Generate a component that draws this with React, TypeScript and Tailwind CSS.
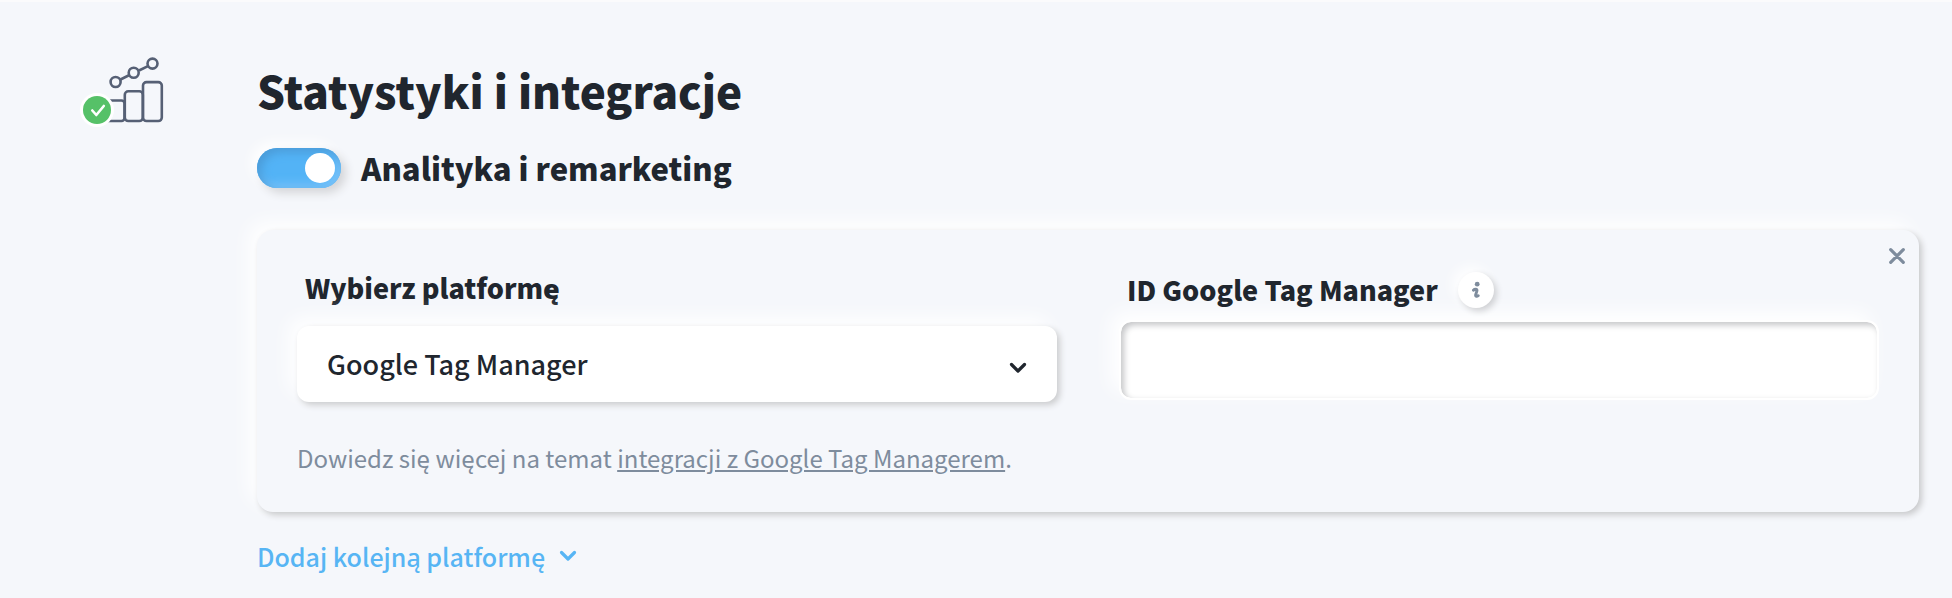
import { ReactNode } from "react";

type FieldLabelProps = {
  htmlFor: string;
  children: ReactNode;
};

function FieldLabel({ htmlFor, children }: FieldLabelProps) {
  return (
    <label htmlFor={htmlFor} className="text-[27px] leading-9 font-black">
      {children}
    </label>
  );
}

function ChevronDown({ className }: { className: string }) {
  return (
    <svg viewBox="0 0 18 12" className={className} fill="none" aria-hidden="true">
      <path
        d="M2.500 2.500 9 9l6.500-6.500"
        stroke="currentColor"
        strokeWidth="3.200"
        strokeLinecap="round"
        strokeLinejoin="round"
      />
    </svg>
  );
}

function StatsIcon() {
  return (
    <svg viewBox="0 0 84 84" className="size-21 overflow-visible" fill="none" aria-hidden="true">
      <g stroke="#566075" strokeWidth="2.600">
        <path d="m38.500 33.500 9-4.500M57 24.500l9.500-4.600" />
        <circle cx="33.600" cy="36" r="5" />
        <circle cx="51.700" cy="26.800" r="5" />
        <circle cx="70.500" cy="17.600" r="5" />
        <path d="M26 54.500h13.500a3 3 0 0 1 3 3v14.500a3 3 0 0 1-3 3H26" />
        <rect x="42.800" y="45.300" width="18" height="29.700" rx="3.500" />
        <rect x="61" y="36.100" width="18.800" height="38.900" rx="3.500" />
      </g>
      <circle cx="15" cy="64" r="17" fill="#fff" />
      <circle cx="15" cy="64" r="14" fill="#56c168" />
      <path
        d="m10.300 64.500 4 4.500 7.500-9"
        stroke="#fff"
        strokeWidth="2.600"
        strokeLinecap="round"
        strokeLinejoin="round"
      />
    </svg>
  );
}

export default function App() {
  return (
    <div className="min-h-screen border-t-2 border-[#fbfbfc] bg-[#f5f7fb] pr-[33px] pb-6 pl-[82px] font-['Noto_Sans_CJK_SC','Noto_Sans',sans-serif] text-[#20262e]">
      <div className="flex items-start">
        {/* Section icon */}
        <div className="w-[175px] shrink-0 pt-11">
          <StatsIcon />
        </div>

        <section className="min-w-0 flex-1 pt-15">
          <h1 className="text-[44px] leading-[56px] font-black">
            Statystyki i integracje
          </h1>

          {/* Analytics toggle */}
          <div className="mt-[30px] flex items-center gap-5">
            <input
              id="analytics"
              type="checkbox"
              role="switch"
              defaultChecked
              className="flex h-10 w-21 shrink-0 cursor-pointer appearance-none items-center justify-end rounded-full bg-[#53b3f6] pr-1.5 shadow-[inset_4px_4px_10px_#4a9bd8,inset_-4px_-4px_10px_#7cc5fb,5px_5px_10px_#d4d5d8,-5px_-5px_14px_#ffffff] before:size-[30px] before:rounded-full before:bg-white"
            />
            <label htmlFor="analytics" className="text-[31px] leading-10 font-black">
              Analityka i remarketing
            </label>
          </div>

          {/* Platform card */}
          <div className="relative mt-[42px] rounded-2xl bg-[#f5f7fb] px-10 pt-10 pb-9 shadow-[3px_3px_6px_#c8c9cb,-8px_-8px_20px_#ffffff]">
            <button
              type="button"
              aria-label="Usuń platformę"
              className="absolute top-3 right-2 p-1.5 text-[#7e8c9d]"
            >
              <svg viewBox="0 0 16 16" className="size-4" fill="none">
                <path
                  d="m1.700 1.700 12.600 12.600m0-12.600-12.600 12.600"
                  stroke="currentColor"
                  strokeWidth="3.200"
                  strokeLinecap="round"
                />
              </svg>
            </button>

            <div className="grid grid-cols-2 items-start gap-[62px]">
              <div>
                <div className="flex pl-2">
                  <FieldLabel htmlFor="platform">Wybierz platformę</FieldLabel>
                </div>
                <div className="relative mt-5">
                  <select
                    id="platform"
                    className="h-[76px] w-full appearance-none rounded-xl bg-white px-[30px] text-[27px] font-medium shadow-[3px_3px_6px_#cbccce,-8px_-8px_20px_#ffffff]"
                  >
                    <option>Google Tag Manager</option>
                  </select>
                  <ChevronDown className="pointer-events-none absolute top-9 right-[30px] h-3 w-4.5" />
                </div>
              </div>

              <div className="pt-0.5">
                {/* Sits above the glow of the text box */}
                <div className="relative z-10 flex items-center gap-5 pl-2">
                  <FieldLabel htmlFor="gtm-id">ID Google Tag Manager</FieldLabel>
                  <button
                    type="button"
                    aria-label="Informacje"
                    className="flex size-9 items-center justify-center rounded-full bg-white text-[#7e8c9d] shadow-[3px_3px_6px_#cfd0d3,-5px_-5px_14px_#ffffff]"
                  >
                    <svg viewBox="0 0 8 18" className="h-4.5 w-2" fill="none">
                      <circle cx="5.200" cy="3.200" r="2.400" fill="currentColor" />
                      <path
                        d="M1.400 9.200C2.700 7.800 5.400 7.700 4.900 9.900l-1.200 3.700c-.5 2.200 1.400 2 2.500 1.100"
                        stroke="currentColor"
                        strokeWidth="2.900"
                        strokeLinecap="round"
                      />
                    </svg>
                  </button>
                </div>
                <input
                  id="gtm-id"
                  type="text"
                  className="mt-3 h-20 w-full rounded-xl border-2 border-white bg-white px-7 text-[27px] shadow-[inset_3px_3px_6px_#c4c5c7,-8px_-8px_20px_#ffffff]"
                />
              </div>
            </div>

            <p className="mt-[38px] text-[24px] leading-9 text-[#7e8c9d]">
              Dowiedz się więcej na temat{" "}
              <a href="#" className="underline">
                integracji z Google Tag Managerem
              </a>
              .
            </p>
          </div>

          {/* Add another platform */}
          <button
            type="button"
            className="mt-7 flex items-center gap-3.5 text-[#57b5f4]"
          >
            <span className="text-[25px] leading-8 font-medium">
              Dodaj kolejną platformę
            </span>
            <ChevronDown className="h-3 w-4.5" />
          </button>
        </section>
      </div>
    </div>
  );
}
